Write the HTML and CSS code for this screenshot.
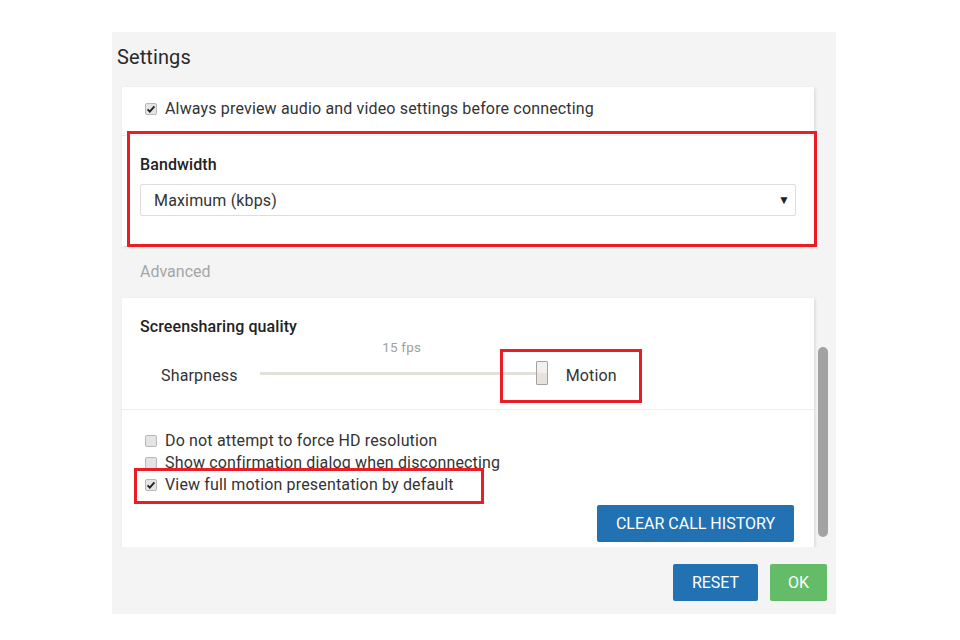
FILE: index.html
```html
<!DOCTYPE html>
<html>
<head>
<meta charset="utf-8">
<link rel="stylesheet" href="styles.css">
</head>
<body>
<div class="dialog">
  <div class="title">Settings</div>
  <div class="body">
    <div class="content">
      <div class="card">
        <div class="section top-row">
          <label class="check-row"><span class="cb checked"><svg viewBox="0 0 12 12" width="12" height="12"><path d="M2.6 6.4 L4.8 8.6 L9.4 3.4" fill="none" stroke="#222" stroke-width="1.8"/></svg></span>Always preview audio and video settings before connecting</label>
        </div>
        <div class="section bandwidth">
          <div class="field-label">Bandwidth</div>
          <div class="select"><span>Maximum (kbps)</span><span class="arrow">&#9660;</span></div>
        </div>
      </div>
      <div class="advanced">Advanced</div>
      <div class="card">
        <div class="section quality">
          <div class="field-label">Screensharing quality</div>
          <div class="slider-row">
            <span class="slider-label sharp">Sharpness</span>
            <div class="slider">
              <div class="fps">15 fps</div>
              <div class="track-area">
                <div class="track"></div>
                <div class="thumb"></div>
              </div>
            </div>
            <span class="slider-label motion">Motion</span>
          </div>
        </div>
        <div class="section options">
          <label class="check-row"><span class="cb"></span>Do not attempt to force HD resolution</label>
          <label class="check-row"><span class="cb"></span>Show confirmation dialog when disconnecting</label>
          <label class="check-row"><span class="cb checked"><svg viewBox="0 0 12 12" width="12" height="12"><path d="M2.6 6.4 L4.8 8.6 L9.4 3.4" fill="none" stroke="#222" stroke-width="1.8"/></svg></span>View full motion presentation by default</label>
          <div class="btn-row"><button class="btn blue clear">Clear call history</button></div>
        </div>
      </div>
    </div>
    <div class="scrollbar"><div class="scroll-thumb"></div></div>
  </div>
  <div class="footer">
    <button class="btn blue reset">Reset</button>
    <button class="btn green ok">OK</button>
  </div>
  <div class="mark mark-bandwidth"></div>
  <div class="mark mark-motion"></div>
  <div class="mark mark-view"></div>
</div>
</body>
</html>
```

FILE: styles.css
```css
* { box-sizing: border-box; }
html, body { margin: 0; padding: 0; background: #fff; }
body { font-family: Roboto, "Liberation Sans", sans-serif; color: #333; font-size: 16px; letter-spacing: 0.16px; }

.dialog {
  position: relative;
  margin: 32px 0 0 112px;
  width: 724px;
  height: 582px;
  background: #f4f4f4;
  display: flex;
  flex-direction: column;
}

.title {
  height: 54px;
  padding: 13px 0 0 5px;
  font-size: 20px;
  line-height: 24px;
  color: #2a2a2a;
  letter-spacing: 0.1px;
}

.body {
  display: flex;
  height: 461px;
  overflow: hidden;
}

.content {
  width: 692px;
  margin-left: 10px;
  padding-top: 1px;
}

.card {
  background: #fff;
  box-shadow: 1px 1px 3px rgba(0,0,0,0.13);
}

.top-row {
  padding: 11px 0 0 23px;
  height: 49px;
  border-bottom: 1px solid #f0f0f0;
}

.check-row {
  display: flex;
  align-items: center;
  line-height: 22px;
  height: 22px;
  color: #333;
}

.cb {
  width: 12px;
  height: 12px;
  border: 1px solid #b8b8b8;
  border-radius: 2px;
  background: #e4e4e4;
  margin-right: 8px;
  display: flex;
  align-items: center;
  justify-content: center;
  flex: none;
}
.cb svg { display: block; margin: -1px; }

.bandwidth { padding: 19px 18px 30px 18px; }

.field-label {
  font-weight: 500;
  line-height: 20px;
  color: #222;
  letter-spacing: 0.1px;
}

.select {
  margin-top: 9px;
  height: 32px;
  border: 1px solid #ddd;
  border-radius: 2px;
  display: flex;
  align-items: center;
  justify-content: space-between;
  padding: 0 5px 0 13px;
  color: #333;
}
.arrow { font-size: 12px; color: #222; }

.advanced {
  height: 52px;
  line-height: 52px;
  padding-left: 18px;
  color: #a6a6a6;
  font-size: 16px;
  letter-spacing: 0;
}

.quality {
  padding: 19px 18px 0 18px;
  height: 112px;
  border-bottom: 1px solid #efefef;
}

.slider-row {
  display: flex;
  align-items: flex-end;
}

.slider-label { line-height: 24px; margin-bottom: -3px; }
.sharp { margin-left: 21px; }
.motion { margin-left: 19px; }

.slider {
  margin-left: 22px;
  width: 287px;
  display: flex;
  flex-direction: column;
}
.fps {
  margin-top: 2px;
  width: 284px;
  text-align: center;
  font-size: 13.5px;
  line-height: 16px;
  color: #a0a0a0;
  margin-bottom: 6px;
}
.track-area { position: relative; height: 24px; }
.track {
  position: absolute;
  left: 0;
  top: 11px;
  width: 280px;
  height: 3px;
  background: #e3dfd9;
}
.thumb {
  position: absolute;
  left: 276px;
  top: 0;
  width: 12px;
  height: 24px;
  border: 1px solid #aaa29b;
  border-radius: 1px;
  background: linear-gradient(#f2f0ee 50%, #e6e2dd 50%);
}

.options { padding: 20px 20px 10px 23px; }

.btn-row {
  display: flex;
  justify-content: flex-end;
  margin-top: 9px;
}

.btn {
  border: none;
  border-radius: 2px;
  color: #fff;
  font-family: Roboto, "Liberation Sans", sans-serif;
  font-size: 16px;
  text-transform: uppercase;
  height: 37px;
  padding: 0;
}
.blue { background: #2271b3; }
.green { background: #64bb68; }
.clear { width: 197px; }

.scrollbar {
  width: 10px;
  margin-left: 4px;
}
.scroll-thumb {
  margin-top: 261px;
  height: 190px;
  border-radius: 5px;
  background: #a3a3a3;
}

.footer {
  display: flex;
  justify-content: flex-end;
  gap: 12px;
  padding: 17px 9px 0 0;
}
.reset { width: 85px; }
.ok { width: 57px; }

.mark {
  position: absolute;
  border: 3px solid #ec1c24;
}
.mark-bandwidth { left: 15px; top: 99px; width: 690px; height: 116px; }
.mark-motion { left: 388px; top: 317px; width: 142px; height: 54px; }
.mark-view { left: 22px; top: 436px; width: 350px; height: 36px; }
```
